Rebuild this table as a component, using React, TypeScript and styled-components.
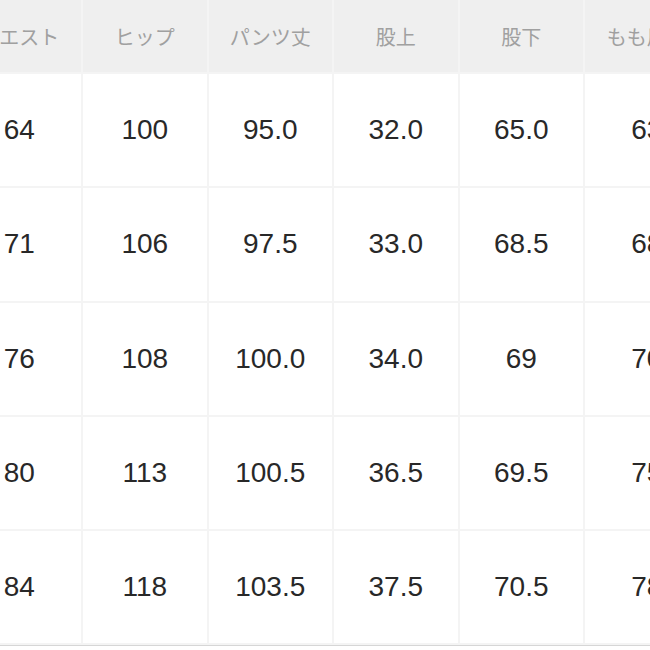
import React from "react";
import styled, { createGlobalStyle } from "styled-components";

const Global = createGlobalStyle`
  html, body { margin: 0; padding: 0; background: #ffffff; }
  body { width: 650px; height: 650px; overflow: hidden; }
`;

const Viewport = styled.div`
  width: 650px;
  height: 650px;
  overflow: hidden;
  background: #ffffff;
`;

const Table = styled.div<{ $cols: number }>`
  display: grid;
  grid-template-columns: repeat(${(p) => p.$cols}, 123.5px);
  grid-template-rows: 72px repeat(5, 112.3px);
  gap: 2px;
  width: max-content;
  margin-left: -42.5px;
  background: #f4f4f4;
  border-bottom: 2px solid #f4f4f4;
  box-shadow: 0 1px 0 #d6d6d6;
`;

const HeadCell = styled.div`
  display: flex;
  align-items: center;
  justify-content: center;
  background: #efefef;
  color: #a0a0a0;
  font-family: "Noto Sans CJK JP", "Noto Sans", sans-serif;
  font-size: 20px;
  white-space: nowrap;
`;

const Cell = styled.div`
  display: flex;
  align-items: center;
  justify-content: center;
  background: #ffffff;
  color: #282828;
  font-family: "Liberation Sans", Arial, sans-serif;
  font-size: 28px;
  white-space: nowrap;
`;

const headers = ["ウエスト", "ヒップ", "パンツ丈", "股上", "股下", "もも周り"];
const rows = [
  ["64", "100", "95.0", "32.0", "65.0", "63"],
  ["71", "106", "97.5", "33.0", "68.5", "68"],
  ["76", "108", "100.0", "34.0", "69", "70"],
  ["80", "113", "100.5", "36.5", "69.5", "75"],
  ["84", "118", "103.5", "37.5", "70.5", "78"],
];

export default function App() {
  return (
    <>
      <Global />
      <Viewport>
        <Table $cols={headers.length}>
          {headers.map((h) => (
            <HeadCell key={h}>{h}</HeadCell>
          ))}
          {rows.map((r, i) =>
            r.map((v, j) => <Cell key={`${i}-${j}`}>{v}</Cell>)
          )}
        </Table>
      </Viewport>
    </>
  );
}
